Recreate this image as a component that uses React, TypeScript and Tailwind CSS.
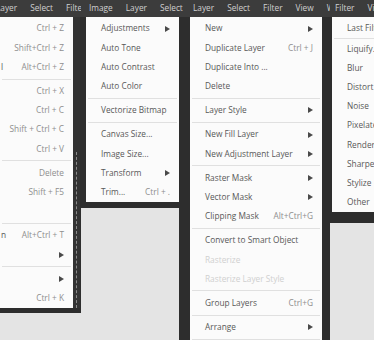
type Entry = { label?: string; sc?: string; arrow?: boolean; disabled?: boolean } | "sep"

const editItems: Entry[] = [
  { sc: "Ctrl + Z" },
  { sc: "Shift+Ctrl + Z" },
  { label: "l", sc: "Alt+Ctrl + Z" },
  "sep",
  { sc: "Ctrl + X" },
  { sc: "Ctrl + C" },
  { sc: "Shift + Ctrl + C" },
  { sc: "Ctrl + V" },
  "sep",
  { sc: "Delete" },
  { sc: "Shift + F5" },
  {},
  "sep",
  { label: "n", sc: "Alt+Ctrl + T" },
  { arrow: true },
  "sep",
  { arrow: true },
  { sc: "Ctrl + K" },
]

const imageItems: Entry[] = [
  { label: "Adjustments", arrow: true },
  { label: "Auto Tone" },
  { label: "Auto Contrast" },
  { label: "Auto Color" },
  "sep",
  { label: "Vectorize Bitmap" },
  "sep",
  { label: "Canvas Size..." },
  { label: "Image Size..." },
  { label: "Transform", arrow: true },
  { label: "Trim...", sc: "Ctrl + ." },
]

const layerItems: Entry[] = [
  { label: "New", arrow: true },
  { label: "Duplicate Layer", sc: "Ctrl + J" },
  { label: "Duplicate Into ..." },
  { label: "Delete" },
  "sep",
  { label: "Layer Style", arrow: true },
  "sep",
  { label: "New Fill Layer", arrow: true },
  { label: "New Adjustment Layer", arrow: true },
  "sep",
  { label: "Raster Mask", arrow: true },
  { label: "Vector Mask", arrow: true },
  { label: "Clipping Mask", sc: "Alt+Ctrl+G" },
  "sep",
  { label: "Convert to Smart Object" },
  { label: "Rasterize", disabled: true },
  { label: "Rasterize Layer Style", disabled: true },
  "sep",
  { label: "Group Layers", sc: "Ctrl+G" },
  "sep",
  { label: "Arrange", arrow: true },
  "sep",
  { label: "Merge Down", sc: "Ctrl+E" },
]

const filterItems: Entry[] = [
  { label: "Last Filter" },
  "sep",
  { label: "Liquify..." },
  { label: "Blur" },
  { label: "Distort" },
  { label: "Noise" },
  { label: "Pixelate" },
  { label: "Render" },
  { label: "Sharpen" },
  { label: "Stylize" },
  { label: "Other" },
]

function Arrow() {
  return (
    <svg width="5" height="6" viewBox="0 0 5 6" className="shrink-0">
      <path d="M0 0L5 3L0 6Z" fill="#4a4a4a" />
    </svg>
  )
}

function Menu({ items, className = "", pad = "pl-[15px]", thinSep = false }: { items: Entry[]; className?: string; pad?: string; thinSep?: boolean }) {
  return (
    <div className={`bg-[#fbfbfb] pt-[2px] ${className}`}>
      {items.map((it, i) =>
        it === "sep" ? (
          <div key={i} className={`mx-[2px] h-px bg-[#e0e0e0] ${thinSep ? "" : "my-[2px]"}`} />
        ) : (
          <div key={i} className={`flex h-[19.2px] items-center justify-between gap-2 whitespace-nowrap pr-[9px] ${pad}`}>
            <span className={it.disabled ? "text-[#d0d0d0]" : "text-[#585858]"}>{it.label}</span>
            {it.arrow ? <Arrow /> : <span className="text-[#8e8e8e]">{it.sc}</span>}
          </div>
        )
      )}
    </div>
  )
}

function MenuBar({ items, pad }: { items: string[]; pad: string }) {
  return (
    <div className={`flex h-[17px] shrink-0 items-center gap-[13px] overflow-hidden whitespace-nowrap bg-[#3c3c3c] text-[#d0d0d0] ${pad}`}>
      {items.map((t) => (
        <span key={t}>{t}</span>
      ))}
    </div>
  )
}

export default function App() {
  return (
    <div className="flex h-[340px] w-[374px] overflow-hidden bg-[#2d2d2d] font-['Open_Sans',sans-serif] text-[8.3px] leading-none">
      {/* edit */}
      <div className="flex w-[81px] shrink-0 flex-col overflow-hidden">
        <MenuBar items={["Layer", "Select", "Filter"]} pad="-ml-[4px]" />
        <div className="flex flex-1 flex-col">
          <div className="flex">
            <Menu items={editItems} className="w-[73px]" pad="pl-[1px]" />
            <div className="flex w-[7px] justify-center bg-[#333333] pt-[135px]">
              <div className="h-full border-l border-dashed border-[#8a8a8a]" />
            </div>
          </div>
          <div className="h-[5px]" />
          <div className="flex-1 bg-[#e4e4e4]" />
        </div>
      </div>

      {/* image */}
      <div className="flex w-[102px] shrink-0 flex-col overflow-hidden">
        <MenuBar items={["Image", "Layer", "Select"]} pad="pl-[8px]" />
        <div className="flex flex-1 flex-col pr-[4px]">
          <Menu items={imageItems} className="ml-[5px] overflow-hidden" />
          <div className="h-[6px]" />
          <div className="flex-1 bg-[#e4e4e4]" />
        </div>
      </div>

      {/* layer */}
      <div className="flex w-[147px] shrink-0 flex-col overflow-hidden">
        <MenuBar items={["Layer", "Select", "Filter", "View", "Window"]} pad="pl-[10px]" />
        <div className="flex-1 pl-[7px] pr-[8px]">
          <Menu items={layerItems} />
        </div>
      </div>

      {/* filter */}
      <div className="flex w-[44px] shrink-0 flex-col overflow-hidden">
        <MenuBar items={["Filter", "View"]} pad="pl-[5px]" />
        <div className="flex flex-1 flex-col">
          <Menu items={filterItems} className="ml-[2px] w-[110px]" thinSep />
          <div className="h-[11px]" />
          <div className="flex-1 bg-[#e4e4e4]" />
        </div>
      </div>
    </div>
  )
}
